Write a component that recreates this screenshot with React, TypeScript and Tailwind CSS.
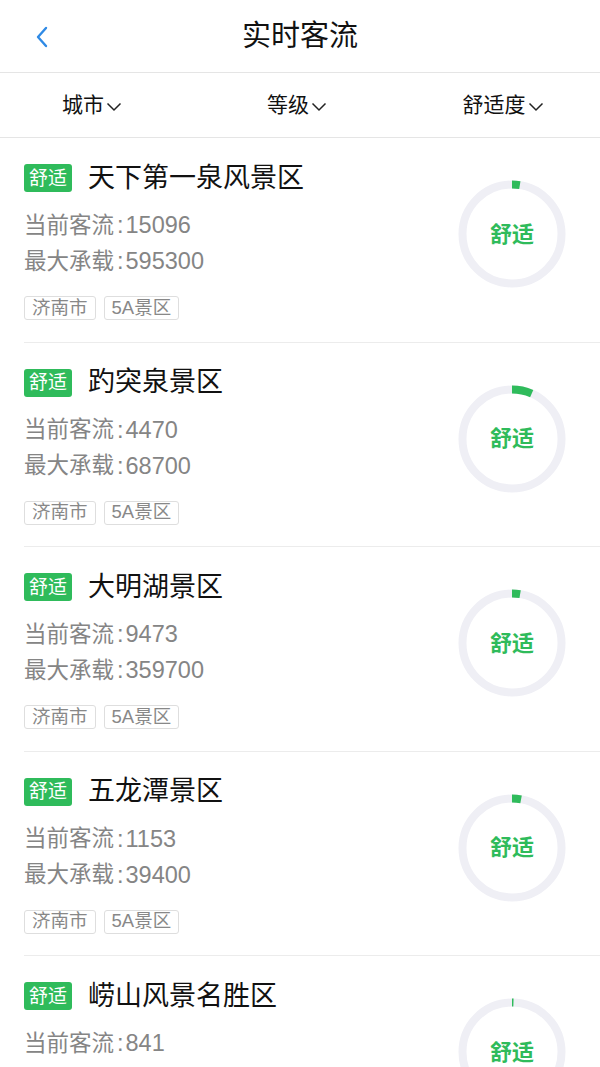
import React from "react";

type Item = { name: string; cur: number; max: number; city: string; level: string };

const items: Item[] = [
  { name: "天下第一泉风景区", cur: 15096, max: 595300, city: "济南市", level: "5A景区" },
  { name: "趵突泉景区", cur: 4470, max: 68700, city: "济南市", level: "5A景区" },
  { name: "大明湖景区", cur: 9473, max: 359700, city: "济南市", level: "5A景区" },
  { name: "五龙潭景区", cur: 1153, max: 39400, city: "济南市", level: "5A景区" },
  { name: "崂山风景名胜区", cur: 841, max: 180000, city: "青岛市", level: "5A景区" },
];

const FONT = { fontFamily: '"Liberation Sans", "Noto Sans CJK SC", sans-serif' };

function Ring({ ratio }: { ratio: number }) {
  const r = 49.5;
  const c = 2 * Math.PI * r;
  const len = Math.max(ratio * c, 1.5);
  return (
    <div className="relative w-[108px] h-[108px]">
      <svg width="108" height="108" viewBox="0 0 108 108" className="absolute inset-0">
        <circle cx="54" cy="54" r={r} fill="none" stroke="#efeff5" strokeWidth="8" />
        <circle
          cx="54"
          cy="54"
          r={r}
          fill="none"
          stroke="#2fbb5b"
          strokeWidth="8"
          strokeDasharray={`${len} ${c}`}
          transform="rotate(-90 54 54)"
        />
      </svg>
      <div className="absolute inset-0 flex items-center justify-center text-[22px] font-bold text-[#2fbb5b]">
        舒适
      </div>
    </div>
  );
}

function Chevron() {
  return (
    <svg width="16" height="10" viewBox="0 0 16 10" className="ml-[2px] mt-[4px]">
      <polyline points="1.5,1.5 8,8 14.5,1.5" fill="none" stroke="#222" strokeWidth="1.5" />
    </svg>
  );
}

function Stat({ label, value }: { label: string; value: number }) {
  return (
    <div className="h-[36px] flex items-center leading-none overflow-visible">
      <span className="text-[22.5px]">{label}</span>
      <span className="text-[23.5px] pl-[3px] pr-[2px]">:</span>
      <span className="text-[23.5px]">{value}</span>
    </div>
  );
}

export default function App() {
  return (
    <div className="w-[600px] h-[1067px] overflow-hidden bg-white" style={FONT}>
      <div className="relative h-[73px] flex items-center justify-center border-b border-[#e5e5e5]">
        <svg width="14" height="22" viewBox="0 0 14 22" className="absolute left-[35px] top-[26px]">
          <polyline points="11,2 3,11 11,20" fill="none" stroke="#2f8ae5" strokeWidth="2.4" strokeLinecap="round" strokeLinejoin="round" />
        </svg>
        <div className="text-[29px] text-[#111] leading-none">实时客流</div>
      </div>
      <div className="h-[65px] grid grid-cols-3 border-b border-[#e5e5e5] text-[21px] text-[#111]">
        <div className="flex items-center justify-center pr-[16px]">
          城市
          <Chevron />
        </div>
        <div className="flex items-center justify-center pr-[6px]">
          等级
          <Chevron />
        </div>
        <div className="flex items-center justify-center pl-[6px]">
          舒适度
          <Chevron />
        </div>
      </div>
      <div>
        {items.map((it, i) => (
          <div key={i} className="pl-[24px]">
            <div className="flex pr-[34px] pt-[26px] pb-[21.5px] border-b border-[#ececec]">
              <div className="flex-1 flex flex-col">
                <div className="flex items-center h-[28px]">
                  <div className="w-[48px] h-[28px] rounded-[3px] bg-[#2fbb5b] text-white text-[19px] leading-none flex items-center justify-center">
                    舒适
                  </div>
                  <div className="ml-[16px] text-[27px] text-[#111] leading-none">{it.name}</div>
                </div>
                <div className="mt-[16px] h-[72px] flex flex-col text-[#858585]">
                  <Stat label="当前客流" value={it.cur} />
                  <Stat label="最大承载" value={it.max} />
                </div>
                <div className="mt-[16px] h-[24px] flex gap-[8px]">
                  <div className="h-[24px] px-[7px] border border-[#dedede] rounded-[3px] text-[18.5px] leading-none text-[#888] flex items-center">
                    {it.city}
                  </div>
                  <div className="h-[24px] px-[7px] border border-[#dedede] rounded-[3px] text-[18.5px] leading-none text-[#888] flex items-center">
                    {it.level}
                  </div>
                </div>
              </div>
              <div className="mt-[16px]">
                <Ring ratio={it.cur / it.max} />
              </div>
            </div>
          </div>
        ))}
      </div>
    </div>
  );
}
